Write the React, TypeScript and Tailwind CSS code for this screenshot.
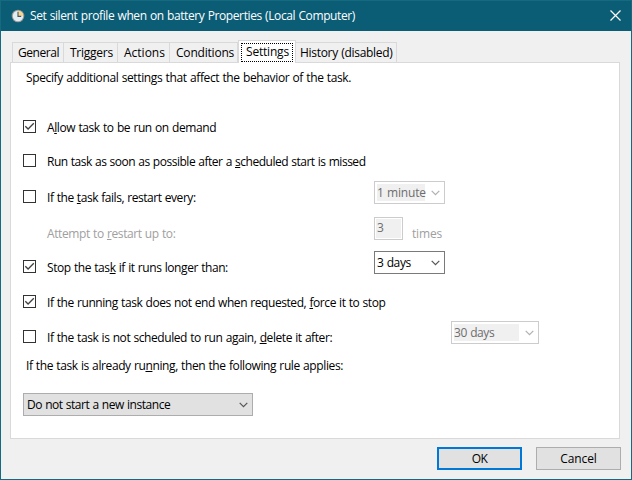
import type { ReactNode } from 'react';

const u = 'underline decoration-1 underline-offset-[1px]';

function Check({ on }: { on?: boolean }) {
  return (
    <span className="block h-[13px] w-[13px] shrink-0 border border-[#333] bg-white">
      {on && (
        <svg viewBox="0 0 11 11" className="block h-[11px] w-[11px]">
          <path d="M1.3 5.2 L4.1 8 L9.8 2.3" fill="none" stroke="#404040" strokeWidth="1.3" />
        </svg>
      )}
    </span>
  );
}

function Chevron({ color }: { color: string }) {
  return (
    <svg viewBox="0 0 9 6" className="block h-[6px] w-[9px] shrink-0">
      <path d="M0.7 0.8 L4.5 4.6 L8.3 0.8" fill="none" stroke={color} strokeWidth="1.2" />
    </svg>
  );
}

function Combo({ className, disabled, fill, children }: { className: string; disabled?: boolean; fill: string; children: ReactNode }) {
  return (
    <div className={`flex h-[23px] shrink-0 items-center justify-between border bg-white pr-[4px] pl-[2px] ${disabled ? 'border-[#ccc] text-[#6d6d6d]' : 'border-[#7a7a7a]'} ${className}`}>
      <span className={`block h-[17px] leading-[17px] ${fill} ${disabled ? 'bg-[#f0f0f0]' : ''}`}>{children}</span>
      <Chevron color={disabled ? '#b0b0b0' : '#555'} />
    </div>
  );
}

function Row({ className, on, label, children }: { className: string; on?: boolean; label: ReactNode; children?: ReactNode }) {
  return (
    <div className={`flex items-start ${className}`}>
      <div className={`flex gap-[11px] ${children ? 'w-[351px] pt-[9px]' : ''}`}>
        <Check on={on} />
        {label}
      </div>
      {children}
    </div>
  );
}

function Tab({ className, children }: { className: string; children: ReactNode }) {
  return <div className={`h-[20px] border-t border-r border-[#d9d9d9] bg-[#f0f0f0] pt-[2px] ${className}`}>{children}</div>;
}

export default function App() {
  return (
    <div className="flex h-[480px] w-[632px] flex-col border border-[#156a7f] bg-[#f0f0f0] font-['Open_Sans',sans-serif] text-[12px] leading-[16px] whitespace-nowrap text-black [word-spacing:0.5px]">
      <header className="flex h-[30px] shrink-0 items-center bg-[#0b5c75] pr-[10px] pl-[10px] text-white">
        <svg viewBox="0 0 14 14" className="h-[14px] w-[14px] shrink-0">
          <circle cx="7" cy="7" r="6.3" fill="#9b9a98" />
          <circle cx="7" cy="7" r="5.2" fill="#e3edf4" />
          <path d="M7 7 V1.8 A5.2 5.2 0 0 1 12.2 7 Z" fill="#f4d692" />
          <path d="M7 2.8 V7.4 H10.2" fill="none" stroke="#46525c" strokeWidth="1.1" />
        </svg>
        <h1 className="ml-[5px] tracking-[-0.39px]">Set silent profile when on battery Properties (Local Computer)</h1>
        <svg viewBox="0 0 11 11" className="mb-[2px] ml-auto h-[11px] w-[11px]">
          <path d="M0.5 0.5 L10.5 10.5 M10.5 0.5 L0.5 10.5" stroke="#fff" strokeWidth="1.2" />
        </svg>
      </header>

      <nav className="relative z-10 -mb-px flex h-[32px] shrink-0 items-end pl-[11px]">
        <Tab className="mb-px w-[52px] border-l pl-[5px] tracking-[-0.45px]">General</Tab>
        <Tab className="mb-px w-[54px] pl-[6px] tracking-[-0.24px]">Triggers</Tab>
        <Tab className="mb-px w-[52px] pl-[6px]">Actions</Tab>
        <Tab className="mb-px w-[68px] pl-[6px] tracking-[-0.2px]">Conditions</Tab>
        <div className="h-[23px] w-[58px] border border-b-0 border-[#d9d9d9] bg-white p-[2px]">
          <div className="h-[19px] border border-dotted border-black pl-[4px] leading-[15px] tracking-[-0.19px]">Settings</div>
        </div>
        <Tab className="mb-px w-[101px] pl-[4px] tracking-[-0.3px]">History (disabled)</Tab>
      </nav>

      <main className="ml-[9px] h-[377px] w-[610px] shrink-0 border border-[#d9d9d9] bg-white pl-[12px]">
        <p className="h-[57px] pt-[7px] pl-[3px] tracking-[-0.37px]">Specify additional settings that affect the behavior of the task.</p>
        <Row className="h-[34px]" on label={<span className="tracking-[-0.4px]">A<span className={u}>l</span>low task to be run on demand</span>} />
        <Row className="h-[27px]" label={<span className="tracking-[-0.48px]">Run task as soon as possible after a <span className={u}>s</span>cheduled start is missed</span>} />
        <Row className="h-[36px]" label={<span className="tracking-[-0.45px]">If the <span className={u}>t</span>ask fails, restart every:</span>}>
          <Combo className="w-[71px]" fill="w-[48px] tracking-[-0.2px]" disabled>1 minute</Combo>
        </Row>
        <div className="flex h-[34px] items-start text-[#a0a0a0]">
          <span className="w-[351px] pt-[9px] pl-[24px] tracking-[-0.4px]">Attempt to <span className={u}>r</span>estart up to:</span>
          <div className="h-[23px] w-[29px] border border-[#ccc] p-px">
            <div className="h-[19px] bg-[#f0f0f0] pl-px leading-[17px] text-[#6d6d6d]">3</div>
          </div>
          <span className="pt-[9px] pl-[9px] tracking-[-0.17px]">times</span>
        </div>
        <Row className="h-[44px]" on label={<span className="tracking-[-0.42px]">Stop the tas<span className={u}>k</span> if it runs longer than:</span>}>
          <Combo className="w-[71px]" fill="tracking-[-0.4px]">3 days</Combo>
        </Row>
        <Row className="h-[26px]" on label={<span className="tracking-[-0.43px]">If the running task does not end when requested, <span className={u}>f</span>orce it to stop</span>} />
        <div className="flex h-[37px] items-start">
          <div className="flex w-[428px] gap-[11px] pt-[9px]">
            <Check />
            <span className="tracking-[-0.42px]">If the task is not scheduled to run again, <span className={u}>d</span>elete it after:</span>
          </div>
          <Combo className="w-[88px]" fill="w-[65px] tracking-[-0.4px]" disabled>30 days</Combo>
        </div>
        <p className="h-[35px] pl-[3px] tracking-[-0.39px]">If the task is already ru<span className={u}>n</span>ning, then the following rule applies:</p>
        <div className="flex h-[23px] w-[230px] items-center justify-between border border-[#adadad] bg-[#e1e1e1] pr-[4px] pl-[3px]">
          <span className="pt-px tracking-[-0.46px]">Do not start a new instance</span>
          <Chevron color="#555" />
        </div>
      </main>

      <footer className="flex justify-end gap-[14px] pt-[8px] pr-[10px]">
        <button className="h-[23px] w-[85px] border-2 border-[#0078d7] bg-[#e1e1e1] leading-[18px] tracking-[-0.5px]">OK</button>
        <button className="h-[23px] w-[85px] border border-[#adadad] bg-[#e1e1e1] leading-[20px] tracking-[-0.1px]">Cancel</button>
      </footer>
    </div>
  );
}
